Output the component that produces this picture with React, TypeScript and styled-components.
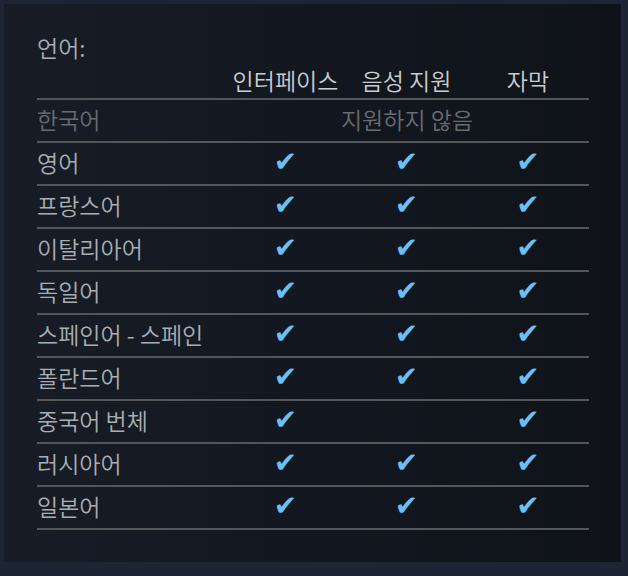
import React from 'react'
import styled, { createGlobalStyle } from 'styled-components'

const GlobalStyle = createGlobalStyle`
  html, body {
    margin: 0;
    padding: 0;
    background: #1d2535;
  }
  body {
    font-family: 'Noto Sans CJK KR', 'Noto Sans', sans-serif;
  }
`

type Lang = {
  name: string
  support?: [boolean, boolean, boolean]
}

const LANGUAGES: Lang[] = [
  { name: '한국어' },
  { name: '영어', support: [true, true, true] },
  { name: '프랑스어', support: [true, true, true] },
  { name: '이탈리아어', support: [true, true, true] },
  { name: '독일어', support: [true, true, true] },
  { name: '스페인어 - 스페인', support: [true, true, true] },
  { name: '폴란드어', support: [true, true, true] },
  { name: '중국어 번체', support: [true, false, true] },
  { name: '러시아어', support: [true, true, true] },
  { name: '일본어', support: [true, true, true] },
]

const COLUMNS = ['인터페이스', '음성 지원', '자막']

const App = () => {
  return (
    <Page>
      <GlobalStyle />
      <Panel>
        <Title>언어:</Title>
        <Table>
          <HeaderRow>
            <span />
            {COLUMNS.map((col) => (
              <HeadCell key={col}>{col}</HeadCell>
            ))}
          </HeaderRow>
          {LANGUAGES.map((lang) => (
            <Row key={lang.name}>
              <NameCell $muted={!lang.support}>{lang.name}</NameCell>
              {lang.support ? (
                lang.support.map((ok, i) => <CheckCell key={i}>{ok ? '✔' : ''}</CheckCell>)
              ) : (
                <Unsupported>지원하지 않음</Unsupported>
              )}
            </Row>
          ))}
        </Table>
      </Panel>
    </Page>
  )
}

const Page = styled.div`
  width: 628px;
  height: 576px;
  padding: 4px 7px 14px 4px;
  box-sizing: border-box;
  background: #1d2535;
`

const Panel = styled.div`
  height: 558px;
  box-sizing: border-box;
  padding: 29px 32px 0 33px;
  background: linear-gradient(to right, #171c26 0%, #12161e 60%, #0f1319 100%);
`

const Title = styled.div`
  font-size: 23px;
  font-weight: 350;
  line-height: 28px;
  color: #a9aeb3;
`

const Table = styled.div`
  width: 552px;
  margin-top: 2px;
`

const grid = `
  display: grid;
  grid-template-columns: 188px 121px 121px 122px;
  align-items: center;
`

const HeaderRow = styled.div`
  ${grid}
  height: 37px;
  box-sizing: border-box;
  border-bottom: 2px solid #545759;
  padding-bottom: 2px;
`

const HeadCell = styled.div`
  text-align: center;
  font-size: 23px;
  font-weight: 350;
  line-height: 28px;
  color: #cbcdcf;
`

const Row = styled.div`
  ${grid}
  height: 43px;
  box-sizing: border-box;
  border-bottom: 2px solid #545759;
  padding-bottom: 3px;
`

const NameCell = styled.div<{ $muted: boolean }>`
  font-size: 23px;
  font-weight: 350;
  line-height: 28px;
  color: ${(p) => (p.$muted ? '#676c72' : '#a9aeb3')};
  white-space: nowrap;
`

const CheckCell = styled.div`
  text-align: center;
  font-family: 'DejaVu Sans', sans-serif;
  font-size: 28px;
  line-height: 28px;
  color: #6bbff2;
`

const Unsupported = styled.div`
  grid-column: 2 / span 3;
  text-align: center;
  font-size: 23px;
  font-weight: 350;
  line-height: 28px;
  color: #676c72;
`

export default App
